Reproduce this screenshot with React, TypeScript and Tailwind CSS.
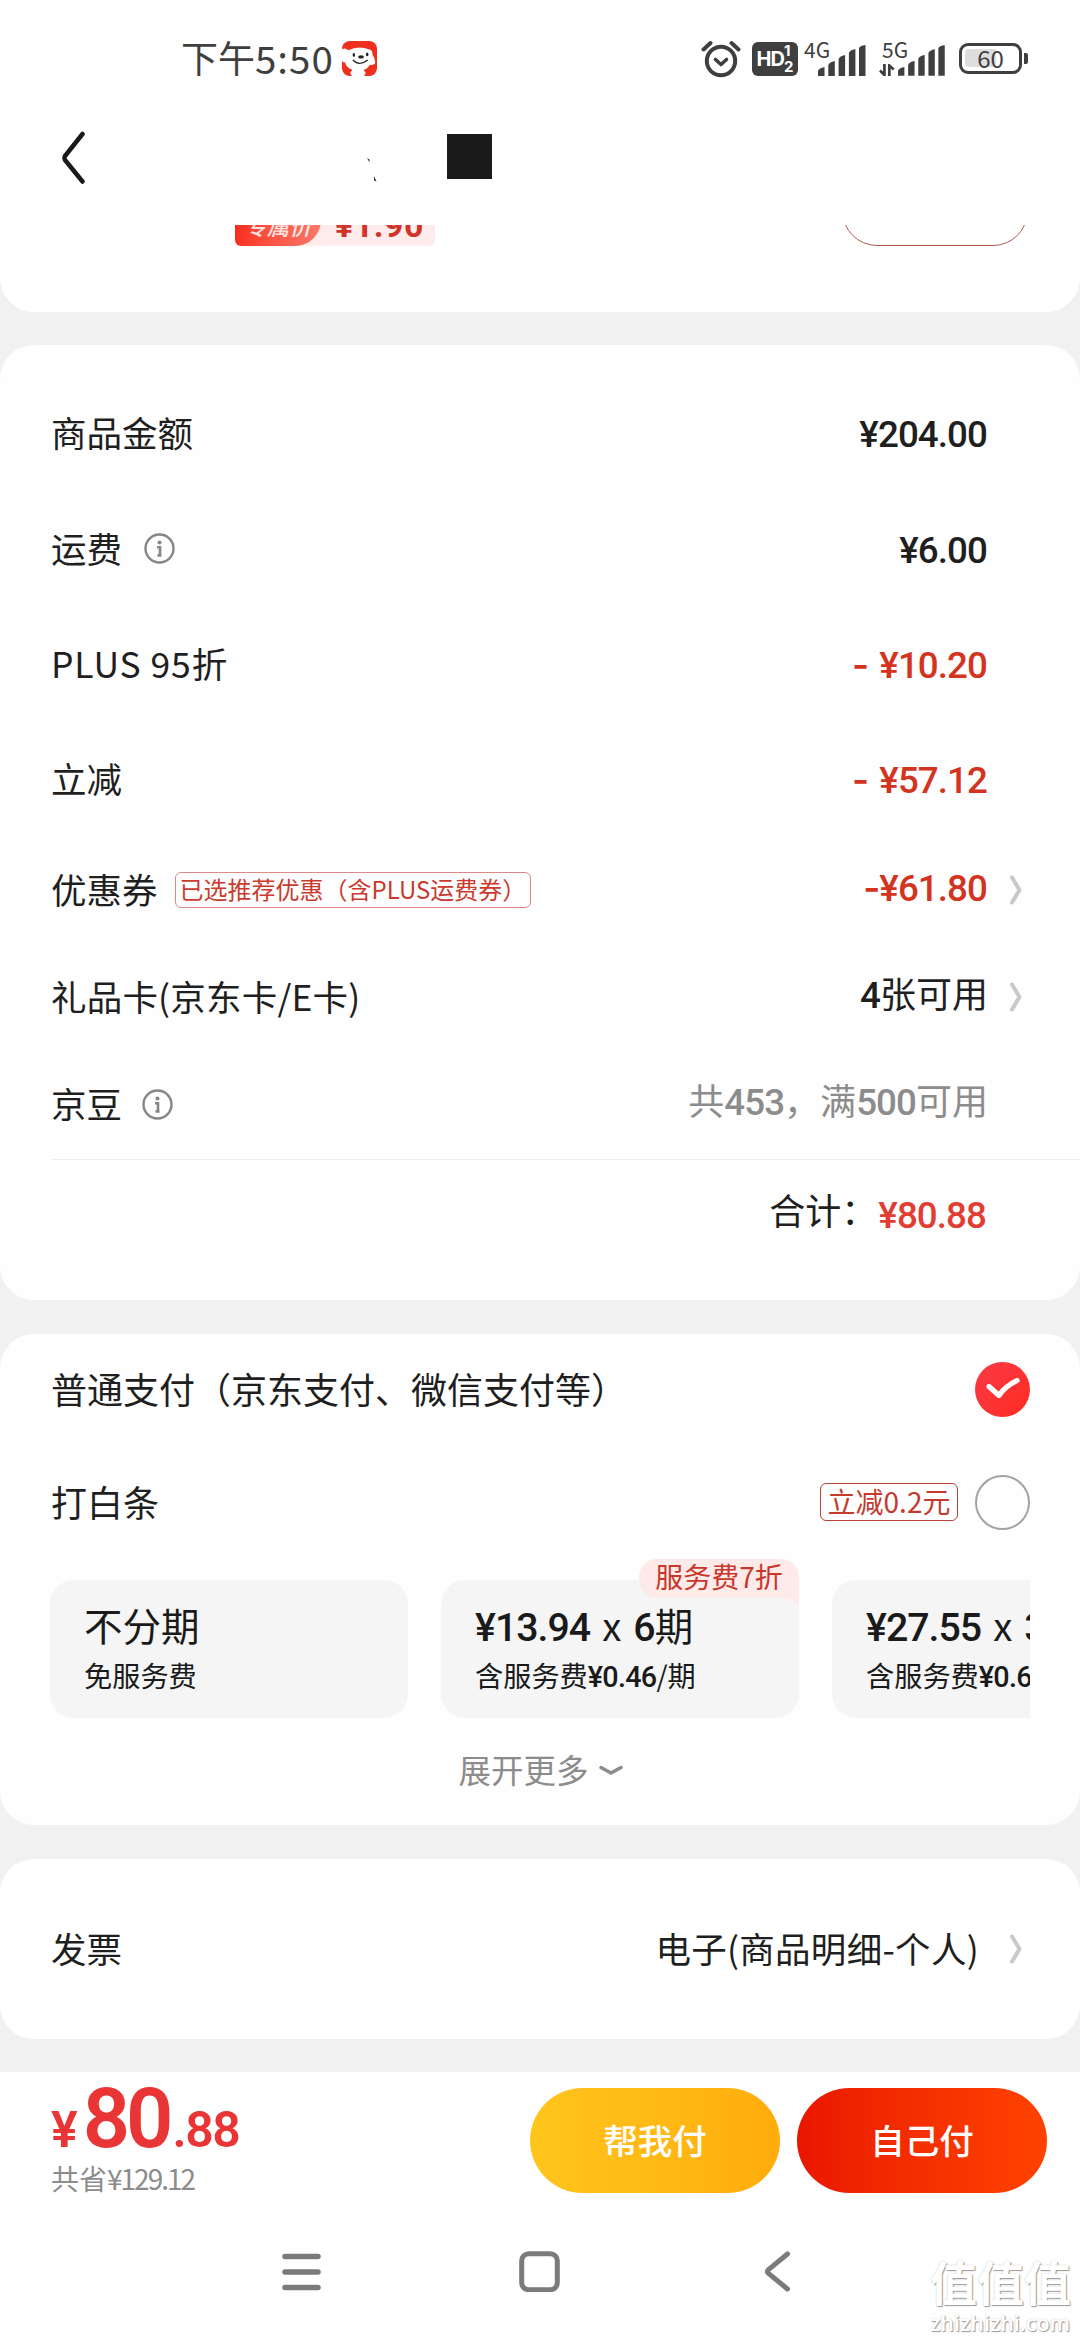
import React from 'react';

interface PlanCardProps {
  title: React.ReactNode;
  fee: React.ReactNode;
  badge?: string;
}

const InfoIcon = () => (
  <svg className="w-[31px] h-[31px]" viewBox="0 0 31 31" fill="none">
    <circle cx="15.5" cy="15.5" r="14" stroke="#868686" strokeWidth="2.4" />
    <circle cx="15.5" cy="9.6" r="2" fill="#868686" />
    <path d="M13 14.200h3v8M13.500 22.400h4" stroke="#868686" strokeWidth="2.6" />
  </svg>
);

const ChevronIcon = () => (
  <svg className="w-[12px] h-[30px]" viewBox="0 0 12 30" fill="none">
    <path d="M2 2.5L9.5 15L2 27.5" stroke="#c9c9c9" strokeWidth="4" strokeLinecap="round" strokeLinejoin="round" />
  </svg>
);

// Digits are heavier and tighter than the Chinese text around them
const Num = ({ children }: { children: React.ReactNode }) => (
  <span className="font-[Roboto] font-medium text-[1.02em] tracking-[-0.025em]">{children}</span>
);

const Minus = () => <span className="font-[Inter] font-semibold">-</span>;

const SignalBars = () => (
  <svg className="w-[48px] h-[31px]" viewBox="0 0 48 31" fill="#3f3f3f">
    <path d="M0 31v-5q1-3 6.500-4v9q0 0-1 0z" />
    <path d="M10.300 31V20q1-3 6.500-4v15z" />
    <path d="M20.600 31V14q1-3 6.500-4v21z" />
    <path d="M30.900 31V8q1-3 6.500-4v27z" />
    <path d="M41 31V3q1-2.500 6.500-3v31z" />
  </svg>
);

const StatusBar = () => (
  <div className="h-[117px] flex items-center pl-[181px] pr-[52px] text-[#3f3f3f]">
    <div className="flex items-center">
      <span className="text-[37px] leading-none pb-[3px]">下午</span>
      <span className="text-[38.500px] leading-none tracking-[1px] pb-[3px]">5:50</span>
      <svg className="w-[35px] h-[35px] ml-[8px]" viewBox="0 0 34 34">
        <rect width="34" height="34" rx="7.500" fill="#f0301f" />
        <path d="M0 8Q3 6 6 9Q16 4 26 8Q30 9 29.500 13Q33 18 32 22Q29 24 27 23Q25 27 21 28L23 31L21.500 34H9.500L8 31L10 28Q4 26 3 21Q0 21 -0.500 18Z" fill="#fff" />
        <ellipse cx="11.500" cy="13.500" rx="1.200" ry="1.800" fill="#222" />
        <ellipse cx="24.500" cy="13" rx="1.200" ry="1.800" fill="#222" />
        <ellipse cx="18.500" cy="15.500" rx="2.800" ry="1.600" fill="#222" />
        <path d="M10.500 18.500Q17 25 25 18.500" stroke="#222" strokeWidth="1.200" fill="none" />
      </svg>
    </div>
    <div className="flex items-center ml-auto">
      <svg className="w-[40px] h-[38px]" viewBox="0 0 40 38" fill="none" stroke="#3f3f3f" strokeLinecap="round" strokeLinejoin="round">
        <circle cx="20" cy="21" r="14.200" strokeWidth="4" />
        <path d="M14.500 19.500L20 24.500L25.500 19.500" strokeWidth="3.600" />
        <path d="M2.500 9.500L9.500 3M37.500 9.500L30.500 3" strokeWidth="4" />
      </svg>
      <div className="w-[46px] h-[34px] ml-[11px] rounded-[6px] bg-[#3f3f3f] text-white flex items-center justify-center font-[Inter] font-bold">
        <span className="text-[20px] tracking-[-1px]">HD</span>
        <span className="flex flex-col text-[15px] leading-[16px]">
          <span>1</span>
          <span>2</span>
        </span>
      </div>
      <div className="relative w-[62px] h-[34px] ml-[6px] flex items-end justify-end">
        <span className="absolute left-0 -top-[3px] text-[21px] leading-[20px]">4G</span>
        <SignalBars />
      </div>
      <div className="relative w-[66px] h-[34px] ml-[13px] flex items-end justify-end">
        <span className="absolute left-[3px] -top-[3px] text-[21px] leading-[20px]">5G</span>
        <svg className="w-[16px] h-[12px] mr-[3px]" viewBox="0 0 16 12" fill="none" stroke="#3f3f3f" strokeWidth="2.800">
          <path d="M5.500 0V11L1 6.500M10.500 12V1.500L15 5.500" />
        </svg>
        <SignalBars />
      </div>
      <div className="relative w-[63px] h-[31px] ml-[14px] rounded-[9px] border-[3.500px] border-[#3f3f3f] flex items-center justify-center">
        <span className="absolute left-[3px] top-[3px] w-[31px] h-[18px] rounded-l-[4px] bg-[#dedede]" />
        <span className="relative text-[24px] leading-none pb-[1px]">60</span>
      </div>
      <span className="w-[4px] h-[11px] ml-[2px] rounded-r-[2px] bg-[#3f3f3f]" />
    </div>
  </div>
);

const TitleBar = () => (
  <div className="h-[108px] flex items-start pl-[61px] pt-[14px]">
    <svg className="w-[25px] h-[54px]" viewBox="0 0 25 54" fill="none">
      <path d="M21.500 3L4 25Q3 27 4 29L21.500 50.500" stroke="#1a1a1a" strokeWidth="4.500" strokeLinecap="round" />
    </svg>
    <svg className="w-[10px] h-[26px] ml-[281px] mt-[26px]" viewBox="0 0 10 26" fill="#333">
      <path d="M0 1l2.500 1.500v3zM7 19l2.500 5.500-2.500-1z" />
    </svg>
    <div className="w-[45px] h-[45px] ml-[70px] mt-[3px] bg-[#1a1a1a]" />
  </div>
);

// Last product line, scrolled half under the title bar
const ProductTail = () => (
  <div className="h-[87px] bg-white rounded-b-[34px] overflow-hidden">
    <div className="h-[21px] overflow-hidden flex items-end justify-between pl-[235px] pr-[52px]">
      <div className="h-[42px] w-[200px] shrink-0 rounded-[6px] bg-[#fdeceb] flex items-center">
        <div className="h-[42px] w-[86px] rounded-l-[6px] rounded-br-[26px] bg-gradient-to-r from-[#fb2c1c] to-[#f8786a] flex items-center justify-center text-white/85 text-[22.500px] leading-none font-medium italic">
          专属价
        </div>
        <span className="ml-[14px] font-[Roboto] font-bold text-[34px] leading-none tracking-[0.500px] text-[#d0342a]">¥1.90</span>
      </div>
      <div className="h-[70px] w-[186px] shrink-0 rounded-full border-[1.500px] border-[#b65a50]" />
    </div>
  </div>
);

const PriceRow = ({ label, children, red }: { label: React.ReactNode; children: React.ReactNode; red?: boolean }) => (
  <div className="h-[115.300px] flex items-center justify-between pr-[93px]">
    <div className="flex items-center">{label}</div>
    <div className={red ? 'text-[36px] text-[#d2341f]' : 'text-[36px] text-[#1f1f1f]'}>
      <Num>{children}</Num>
    </div>
  </div>
);

const PlanCard = ({ title, fee, badge }: PlanCardProps) => (
  <div className="relative w-[358px] h-[138px] shrink-0 rounded-[24px] bg-[#f5f5f5] pl-[34px] pt-[19px] whitespace-nowrap text-[#1a1a1a]">
    <div className="h-[50px] text-[38.500px] leading-[50px]">{title}</div>
    <div className="h-[52px] text-[28.200px] leading-[52px]">{fee}</div>
    {badge && (
      <div className="absolute right-0 -top-[21px]">
        <svg className="absolute right-0 top-[24px] w-[16px] h-[28px]" viewBox="0 0 16 28">
          <path d="M0 0H16V28Q15 16 0 15Z" fill="#feebe9" />
        </svg>
        <div className="relative w-[160px] h-[39px] rounded-[18px] rounded-br-none bg-[#feebe9] text-[#c9372c] text-[28px] leading-[35px] text-center">
          {badge}
        </div>
      </div>
    )}
  </div>
);

const BottomBar = () => (
  <div className="h-[136px] bg-white flex items-start pl-[51px] pr-[33px] pt-[15px]">
    <div className="w-[479px]">
      <div className="h-[64px] flex items-baseline font-[Roboto] font-semibold text-[#e93535] leading-[64px]">
        <span className="text-[50px]">¥</span>
        <span className="text-[83px] tracking-[-4px] ml-[5px]">80</span>
        <span className="text-[50px] tracking-[-1.500px] ml-[3px]">.88</span>
      </div>
      <div className="text-[28px] leading-[40px] mt-[7px] text-[#8c8c8c]">
        共省<span className="tracking-[-2px]">¥129.12</span>
      </div>
    </div>
    <button className="w-[250px] h-[105px] mt-[1px] pb-[2px] rounded-full bg-gradient-to-r from-[#ffc61c] to-[#ffac0c] text-white text-[34.500px] font-medium">
      帮我付
    </button>
    <button className="w-[250px] h-[105px] mt-[1px] ml-[17px] pb-[2px] rounded-full bg-gradient-to-r from-[#ea1500] to-[#ff4200] text-white text-[34.500px] font-medium">
      自己付
    </button>
  </div>
);

const NavBar = () => (
  <div className="h-[132px] bg-white flex items-start pt-[42px] pl-[282px]">
    <svg className="w-[39px] h-[42px]" viewBox="0 0 39 42" fill="none" stroke="#7b7b7b" strokeWidth="5.500" strokeLinecap="round">
      <path d="M3 6.500H36M3 22H36M3 37.500H36" />
    </svg>
    <svg className="w-[41px] h-[42px] ml-[198px]" viewBox="0 0 41 42" fill="none">
      <rect x="2.700" y="3.700" width="35.600" height="36" rx="7" stroke="#7b7b7b" strokeWidth="5" />
    </svg>
    <svg className="w-[27px] h-[42px] ml-[204px]" viewBox="0 0 27 42" fill="none">
      <path d="M23.500 4L4.500 19.500Q2.500 21.500 4.500 23.500L23.500 39" stroke="#7b7b7b" strokeWidth="5" strokeLinecap="round" />
    </svg>
  </div>
);

const App = () => {
  return (
    <div className="relative w-[1080px] h-[2340px] overflow-hidden bg-[#f1f1f1] font-['Noto_Sans_CJK_SC',sans-serif] text-[35.500px] leading-none text-[#1f1f1f]">
      <div className="bg-white">
        <StatusBar />
        <TitleBar />
      </div>
      <ProductTail />

      {/* Price breakdown */}
      <div className="mt-[33px] h-[955px] rounded-[34px] bg-[#fefefe] pl-[51px] pt-[31px]">
        <PriceRow label={<span className="pb-[3px]">商品金额</span>}>¥204.00</PriceRow>
        <PriceRow label={<><span className="pb-[3px]">运费</span><span className="ml-[22px]"><InfoIcon /></span></>}>¥6.00</PriceRow>
        <PriceRow label={<span className="pb-[3px] tracking-[0.900px]">PLUS 95折</span>} red>
          <Minus /> <span className="ml-[3px]">¥10.20</span>
        </PriceRow>
        <PriceRow label={<span className="pb-[3px]">立减</span>} red>
          <Minus /> <span className="ml-[3px]">¥57.12</span>
        </PriceRow>
        <div className="h-[107px] flex items-center pr-[58px] pb-[1px]">
          <span className="pb-[3px]">优惠券</span>
          <span className="ml-[17px] w-[356px] h-[36px] rounded-[6px] border border-[#d98a84] pl-[4px] text-[24px] leading-[31px] text-[#cb3a2e] whitespace-nowrap">
            已选推荐优惠（含PLUS运费券）
          </span>
          <span className="ml-auto mr-[23px] pb-[5px] text-[36px] text-[#d2341f]"><Num><Minus />¥61.80</Num></span>
          <ChevronIcon />
        </div>
        <div className="h-[107px] flex items-center pr-[58px] pb-[1px]">
          <span className="pb-[3px] tracking-[0.200px]">礼品卡(京东卡/E卡)</span>
          <span className="ml-auto mr-[22px] pb-[5px] text-[36px]"><Num>4</Num>张可用</span>
          <ChevronIcon />
        </div>
        <div className="h-[107px] flex items-center pr-[92px] pb-[1px]">
          <span className="pb-[3px]">京豆</span>
          <span className="ml-[20px]"><InfoIcon /></span>
          <span className="ml-auto pb-[5px] text-[36px] text-[#8c8c8c]">共<Num>453</Num>，满<Num>500</Num>可用</span>
        </div>
        <div className="mt-[1px] h-[104px] border-t border-[#eeeeee] flex items-center justify-end pr-[94px] text-[36px]">
          <span className="pb-[5px]">合计：</span>
          <span className="ml-[1px] pt-[5px] text-[#e23d33]"><Num>¥80.88</Num></span>
        </div>
      </div>

      {/* Payment method */}
      <div className="mt-[34px] h-[491px] rounded-[34px] bg-[#fefefe] pl-[51px] pr-[50px]">
        <div className="h-[110px] flex items-center justify-between">
          <span className="pb-[3px] text-[36px]">普通支付（京东支付、微信支付等）</span>
          <span className="w-[55px] h-[55px] rounded-full bg-gradient-to-br from-[#fb3a45] to-[#ff2a1e] flex items-center justify-center">
            <svg className="w-[34px] h-[24px]" viewBox="0 0 34 24" fill="none">
              <path d="M3 9.500L13 18.500Q19 9 31 3.500" stroke="#fff" strokeWidth="5.200" strokeLinecap="round" strokeLinejoin="round" />
            </svg>
          </span>
        </div>
        <div className="h-[116px] flex items-center">
          <span className="pb-[3px] text-[36px]">打白条</span>
          <span className="ml-auto w-[138px] h-[38px] rounded-[6px] border border-[#bb4238] text-center text-[28px] leading-[34px] text-[#c43b2e]">立减0.2元</span>
          <span className="ml-[17px] w-[55px] h-[55px] rounded-full border-2 border-[#a3a3a3]" />
        </div>
        <div className="-ml-[1px] pt-[22px] -mt-[2px] flex gap-[33px] overflow-hidden">
          <PlanCard title="不分期" fee="免服务费" />
          <PlanCard
            title={<><Num>¥13.94</Num><span className="mx-[12px]">x</span><Num>6</Num>期</>}
            fee={<>含服务费<Num>¥0.46</Num>/期</>}
            badge="服务费7折"
          />
          <PlanCard
            title={<><Num>¥27.55</Num><span className="mx-[12px]">x</span><Num>3</Num>期</>}
            fee={<>含服务费<Num>¥0.61</Num>/期</>}
          />
        </div>
        <div className="h-[106px] flex items-center justify-center text-[32.500px] text-[#8c8c8c]">
          <span className="pb-[4px]">展开更多</span>
          <svg className="w-[24px] h-[12px] ml-[10px]" viewBox="0 0 24 12" fill="none">
            <path d="M2 2.500L12 8L22 2.500" stroke="#8c8c8c" strokeWidth="3.400" strokeLinecap="round" strokeLinejoin="round" />
          </svg>
        </div>
      </div>

      {/* Invoice */}
      <div className="mt-[34px] h-[180px] rounded-[34px] bg-white flex items-center pl-[51px] pr-[58px]">
        <span className="pb-[3px]">发票</span>
        <span className="ml-auto mr-[31px] pb-[3px] tracking-[0.300px]">电子(商品明细-个人)</span>
        <ChevronIcon />
      </div>

      <div className="mt-[33px]">
        <BottomBar />
        <NavBar />
      </div>

      {/* Watermark over the navigation bar */}
      <div className="absolute left-[930px] top-[2254px] text-white whitespace-nowrap [text-shadow:1px_1px_1px_#999,0_0_2px_#ccc]">
        <div className="text-[47px] leading-[54px] font-bold">值值值</div>
        <div className="font-['Open_Sans'] font-semibold text-[21.500px] leading-[29px]">zhizhizhi.com</div>
      </div>
    </div>
  );
};

export default App;
